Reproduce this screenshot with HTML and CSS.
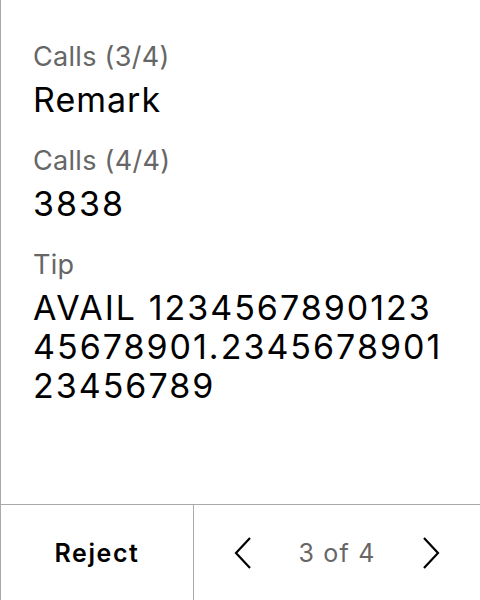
FILE: index.html
```html
<!DOCTYPE html>
<html>
<head>
<meta charset="utf-8">
<link rel="stylesheet" href="styles.css">
</head>
<body>
<div class="panel">
  <div class="content">
    <div class="field">
      <div class="label">Calls (3/4)</div>
      <div class="value">Remark</div>
    </div>
    <div class="field">
      <div class="label">Calls (4/4)</div>
      <div class="value num">3838</div>
    </div>
    <div class="field">
      <div class="label">Tip</div>
      <div class="value num">AVAIL 1234567890123 45678901.2345678901 23456789</div>
    </div>
  </div>
  <div class="footer">
    <div class="reject">Reject</div>
    <div class="pager">
      <svg class="chev" width="18" height="32" viewBox="0 0 18 32"><path d="M16 1 L2 16 L16 31" fill="none" stroke="#000" stroke-width="2.2"/></svg>
      <span class="count">3 of 4</span>
      <svg class="chev" width="18" height="32" viewBox="0 0 18 32"><path d="M2 1 L16 16 L2 31" fill="none" stroke="#000" stroke-width="2.2"/></svg>
    </div>
  </div>
</div>
</body>
</html>
```
FILE: styles.css
```css
html, body {
  margin: 0;
  padding: 0;
  background: #fff;
}
.panel {
  width: 480px;
  height: 600px;
  box-sizing: border-box;
  border-left: 1px solid #aaa;
  display: flex;
  flex-direction: column;
  font-family: Inter, "Noto Sans", sans-serif;
}
.content {
  flex: 1;
  padding: 40px 32px 0 32px;
  display: flex;
  flex-direction: column;
  gap: 25px;
}
.label {
  font-size: 27px;
  line-height: 34px;
  letter-spacing: 0.3px;
  color: #666;
}
.value {
  font-size: 34px;
  line-height: 39px;
  letter-spacing: 1px;
  color: #000;
  margin-top: 6px;
}
.value.num {
  letter-spacing: 2px;
}
.footer {
  height: 96px;
  box-sizing: border-box;
  border-top: 1px solid #aaa;
  display: flex;
}
.reject {
  width: 192px;
  border-right: 1px solid #aaa;
  display: flex;
  align-items: center;
  justify-content: center;
  font-size: 25px;
  font-weight: 600;
  letter-spacing: 1.6px;
  color: #000;
}
.pager {
  flex: 1;
  display: flex;
  align-items: center;
  justify-content: space-between;
  padding: 0 40px;
}
.count {
  font-size: 25px;
  letter-spacing: 1.2px;
  color: #666;
}
```
